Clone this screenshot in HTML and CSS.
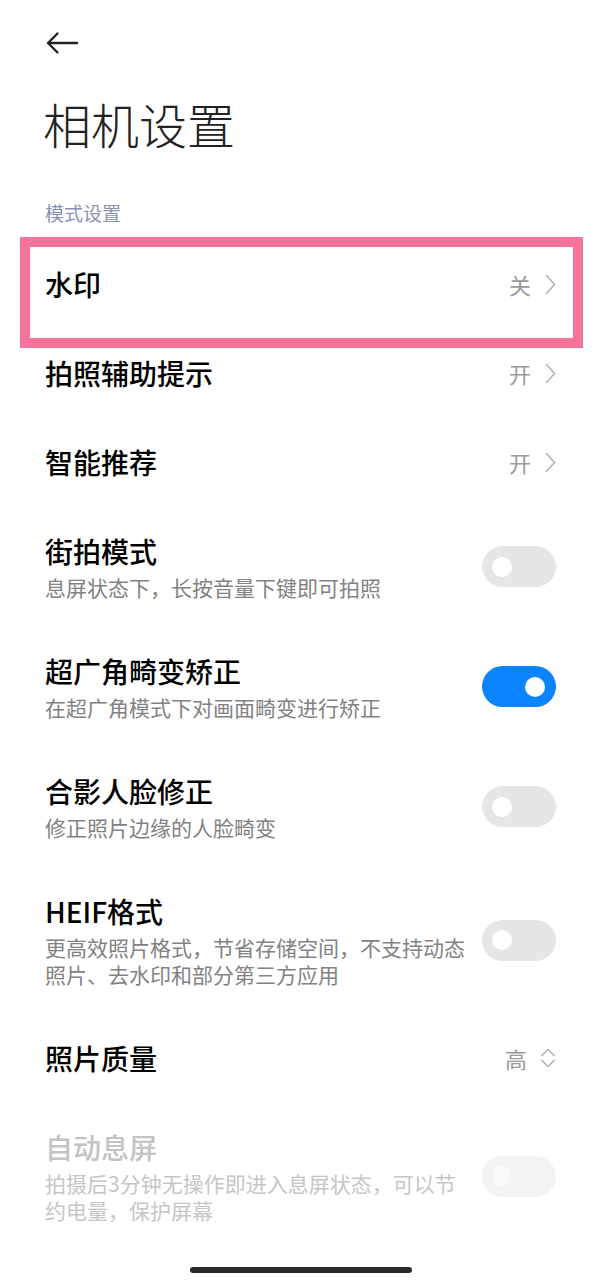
FILE: index.html
```html
<!DOCTYPE html>
<html lang="zh-CN">
<head>
    <meta charset="UTF-8">
    <meta name="viewport" content="width=device-width, initial-scale=1.0">
    <title>相机设置</title>
    <link rel="stylesheet" href="styles.css">
</head>
<body>
    <div class="screen">
        <header class="topbar">
            <button class="back" aria-label="返回">
                <svg width="34" height="24" viewBox="0 0 34 24">
                    <path d="M32 12H3M12.5 2.5L3 12l9.5 9.5" fill="none" stroke="#222" stroke-width="2.4" stroke-linecap="round" stroke-linejoin="round"/>
                </svg>
            </button>
        </header>

        <h1 class="page-title">相机设置</h1>
        <div class="section-label">模式设置</div>

        <ul class="settings">
            <li class="item marked">
                <div class="item-text"><div class="item-title">水印</div></div>
                <span class="item-value">关
                    <svg class="chevron" width="11" height="21" viewBox="0 0 11 21"><path d="M1.5 1.5l8 9-8 9" fill="none" stroke="#b3b3b3" stroke-width="1.6" stroke-linecap="round" stroke-linejoin="round"/></svg>
                </span>
            </li>
            <li class="item">
                <div class="item-text"><div class="item-title">拍照辅助提示</div></div>
                <span class="item-value">开
                    <svg class="chevron" width="11" height="21" viewBox="0 0 11 21"><path d="M1.5 1.5l8 9-8 9" fill="none" stroke="#b3b3b3" stroke-width="1.6" stroke-linecap="round" stroke-linejoin="round"/></svg>
                </span>
            </li>
            <li class="item">
                <div class="item-text"><div class="item-title">智能推荐</div></div>
                <span class="item-value">开
                    <svg class="chevron" width="11" height="21" viewBox="0 0 11 21"><path d="M1.5 1.5l8 9-8 9" fill="none" stroke="#b3b3b3" stroke-width="1.6" stroke-linecap="round" stroke-linejoin="round"/></svg>
                </span>
            </li>
            <li class="item">
                <div class="item-text">
                    <div class="item-title">街拍模式</div>
                    <div class="item-desc">息屏状态下，长按音量下键即可拍照</div>
                </div>
                <span class="switch"><span class="knob"></span></span>
            </li>
            <li class="item">
                <div class="item-text">
                    <div class="item-title">超广角畸变矫正</div>
                    <div class="item-desc">在超广角模式下对画面畸变进行矫正</div>
                </div>
                <span class="switch on"><span class="knob"></span></span>
            </li>
            <li class="item">
                <div class="item-text">
                    <div class="item-title">合影人脸修正</div>
                    <div class="item-desc">修正照片边缘的人脸畸变</div>
                </div>
                <span class="switch"><span class="knob"></span></span>
            </li>
            <li class="item">
                <div class="item-text">
                    <div class="item-title">HEIF格式</div>
                    <div class="item-desc">更高效照片格式，节省存储空间，不支持动态照片、去水印和部分第三方应用</div>
                </div>
                <span class="switch"><span class="knob"></span></span>
            </li>
            <li class="item">
                <div class="item-text"><div class="item-title">照片质量</div></div>
                <span class="item-value">高
                    <svg class="updown" width="16" height="22" viewBox="0 0 16 22"><path d="M2 8.5L8 2.5l6 6M2 13.5l6 6 6-6" fill="none" stroke="#b3b3b3" stroke-width="1.6" stroke-linecap="round" stroke-linejoin="round"/></svg>
                </span>
            </li>
            <li class="item disabled">
                <div class="item-text">
                    <div class="item-title">自动息屏</div>
                    <div class="item-desc">拍摄后3分钟无操作即进入息屏状态，可以节约电量，保护屏幕</div>
                </div>
                <span class="switch"><span class="knob"></span></span>
            </li>
        </ul>

        <div class="home-bar"></div>
    </div>
</body>
</html>
```

FILE: styles.css
```css
body {
    margin: 0;
    background: #fff;
    font-family: "Noto Sans CJK SC", "Noto Sans", sans-serif;
    color: #000;
}
.screen {
    min-height: 100vh;
    padding: 0 44px 0 45px;
    box-sizing: border-box;
    display: flex;
    flex-direction: column;
}
.topbar {
    height: 86px;
    display: flex;
    align-items: center;
}
.back {
    background: none;
    border: none;
    padding: 0;
    display: flex;
    cursor: pointer;
}
.page-title {
    margin: 5px 0 0 -2px;
    font-size: 48px;
    line-height: 64px;
    font-weight: 300;
    color: #222;
}
.section-label {
    margin-top: 44px;
    font-size: 19px;
    line-height: 28px;
    color: #8a92b2;
}
.settings {
    list-style: none;
    margin: 12.5px 0 0;
    padding: 0;
}
.item {
    display: flex;
    align-items: center;
    justify-content: space-between;
    padding: 25.5px 0;
}
.marked {
    position: relative;
}
/* annotation frame around the first row */
.marked::after {
    content: "";
    position: absolute;
    top: -2.5px;
    bottom: -19.5px;
    left: -25px;
    right: -27px;
    border: 10px solid #f6739a;
    pointer-events: none;
}
.item-text {
    width: 428px;
}
.item-title {
    font-size: 28px;
    line-height: 38px;
    font-weight: 500;
}
.item-desc {
    margin-top: 4px;
    font-size: 21px;
    line-height: 27px;
    color: #828282;
}
.item-value {
    display: flex;
    align-items: center;
    gap: 14px;
    font-size: 22px;
    line-height: 30px;
    color: #9a9a9a;
}
.updown {
    margin-left: -1px;
}
.switch {
    flex: none;
    width: 74px;
    height: 41px;
    border-radius: 20.5px;
    background: #e6e6e6;
    display: flex;
    align-items: center;
    padding: 0 10px;
    box-sizing: border-box;
}
.switch.on {
    background: #0d84ff;
    justify-content: flex-end;
    padding: 0 11px;
}
.knob {
    width: 20px;
    height: 20px;
    border-radius: 50%;
    background: #fff;
}
.disabled .item-title {
    color: #c3c3c3;
}
.disabled .item-desc {
    color: #c6c6c6;
}
.disabled .switch {
    background: #f3f3f3;
}
.disabled .knob {
    background: #f9f9f9;
}
.home-bar {
    margin: auto auto 9px;
    width: 222px;
    height: 6px;
    border-radius: 3px;
    background: #2a2a2a;
}
```
